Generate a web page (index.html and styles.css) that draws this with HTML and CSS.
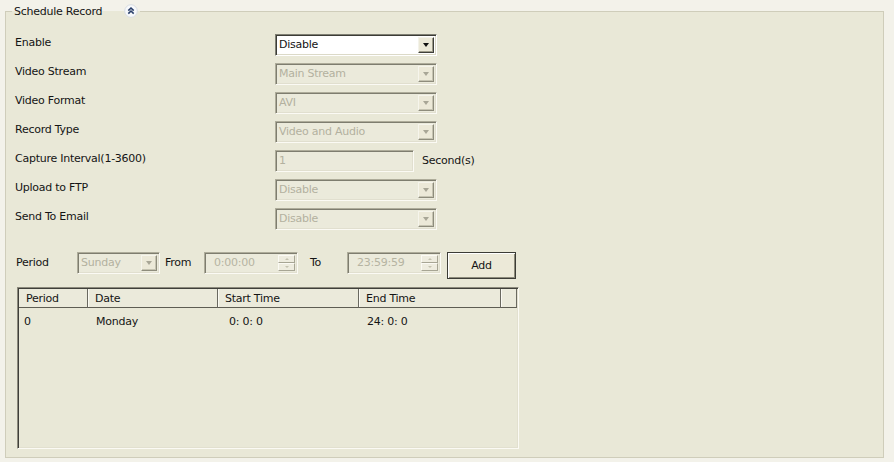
FILE: index.html
```html
<!DOCTYPE html>
<html>
<head>
<meta charset="utf-8">
<title>Schedule Record</title>
<link rel="stylesheet" href="styles.css">
</head>
<body>
<fieldset class="panel">
  <legend class="panel-title">
    <span>Schedule Record</span>
    <span class="collapse-btn">
      <svg width="14" height="14" viewBox="0 0 14 14">
        <circle cx="7" cy="7" r="6.3" fill="#f7f9fb" stroke="#d9dde2" stroke-width="1"/>
        <path d="M4.3 6.6 L7 4 L9.7 6.6 M4.3 9.6 L7 7 L9.7 9.6" fill="none" stroke="#2a3f6a" stroke-width="1.6"/>
      </svg>
    </span>
  </legend>

  <div class="settings">
    <span class="label">Enable</span>
    <div class="combo">
      <span class="combo-value">Disable</span>
      <span class="combo-btn"><i class="arrow"></i></span>
    </div>

    <span class="label">Video Stream</span>
    <div class="combo disabled">
      <span class="combo-value">Main Stream</span>
      <span class="combo-btn"><i class="arrow"></i></span>
    </div>

    <span class="label">Video Format</span>
    <div class="combo disabled">
      <span class="combo-value">AVI</span>
      <span class="combo-btn"><i class="arrow"></i></span>
    </div>

    <span class="label">Record Type</span>
    <div class="combo disabled">
      <span class="combo-value">Video and Audio</span>
      <span class="combo-btn"><i class="arrow"></i></span>
    </div>

    <span class="label">Capture Interval(1-3600)</span>
    <div class="field-unit">
      <div class="textbox disabled">1</div>
      <span class="unit">Second(s)</span>
    </div>

    <span class="label">Upload to FTP</span>
    <div class="combo disabled">
      <span class="combo-value">Disable</span>
      <span class="combo-btn"><i class="arrow"></i></span>
    </div>

    <span class="label">Send To Email</span>
    <div class="combo disabled">
      <span class="combo-value">Disable</span>
      <span class="combo-btn"><i class="arrow"></i></span>
    </div>
  </div>

  <div class="period-bar">
    <span class="period-label">Period</span>
    <div class="combo disabled combo-day">
      <span class="combo-value">Sunday</span>
      <span class="combo-btn"><i class="arrow"></i></span>
    </div>
    <span class="from-label">From</span>
    <div class="spinner disabled">
      <span class="spin-value">0:00:00</span>
      <span class="spin-btns">
        <span class="spin-btn"><i class="tiny-up"></i></span>
        <span class="spin-btn"><i class="tiny-down"></i></span>
      </span>
    </div>
    <span class="to-label">To</span>
    <div class="spinner disabled">
      <span class="spin-value">23:59:59</span>
      <span class="spin-btns">
        <span class="spin-btn"><i class="tiny-up"></i></span>
        <span class="spin-btn"><i class="tiny-down"></i></span>
      </span>
    </div>
    <button class="btn-add" type="button">Add</button>
  </div>

  <div class="records">
    <table class="records-table">
      <colgroup>
        <col class="c-period"><col class="c-date"><col class="c-start"><col class="c-end"><col class="c-rest">
      </colgroup>
      <thead>
        <tr>
          <th>Period</th>
          <th>Date</th>
          <th>Start Time</th>
          <th>End Time</th>
          <th></th>
        </tr>
      </thead>
      <tbody>
        <tr>
          <td class="first">0</td>
          <td>Monday</td>
          <td class="time">0: 0: 0</td>
          <td>24: 0: 0</td>
          <td></td>
        </tr>
      </tbody>
    </table>
  </div>
</fieldset>
</body>
</html>
```

FILE: styles.css
```css
* {
  box-sizing: border-box;
}

body {
  margin: 0;
  padding: 4px 10px 0 5px;
  background: #f3f2ea;
  font-family: "DejaVu Sans", sans-serif;
  font-size: 11px;
  letter-spacing: -0.25px;
  color: #141414;
}

/* group box */
.panel {
  margin: 0;
  width: 879px;
  height: 454px;
  border: 1px solid #cfcdba;
  background: #e9e8d7;
  padding: 16px 9px 0 9px;
}

.panel-title {
  display: flex;
  align-items: center;
  gap: 22px;
  margin-left: -3px;
  margin-top: 1px;
  padding: 0 2px;
  color: #141414;
}

.collapse-btn {
  display: flex;
  width: 14px;
  height: 14px;
}

/* label / control form */
.settings {
  display: grid;
  grid-template-columns: 260px max-content;
  row-gap: 7px;
  align-items: start;
}

.label {
  padding-top: 2px;
  line-height: 14px;
}

.combo {
  display: flex;
  width: 162px;
  height: 22px;
  background: #fff;
  border: 1px solid;
  border-color: #7f7f73 #ffffff #ffffff #7f7f73;
  box-shadow: inset 1px 1px 0 #3c3c36, inset -1px -1px 0 #dcdac8;
  padding: 2px;
}

.combo-value {
  flex: 1;
  line-height: 16px;
  padding-left: 1px;
  white-space: nowrap;
  overflow: hidden;
}

.combo-btn {
  width: 16px;
  height: 16px;
  display: flex;
  align-items: center;
  justify-content: center;
  background: #ece9d8;
  border: 1px solid;
  border-color: #f4f3ea #3f3f3a #3f3f3a #f4f3ea;
  box-shadow: inset -1px -1px 0 #9d9b8a;
}

.arrow {
  display: block;
  width: 0;
  height: 0;
  border-left: 3.5px solid transparent;
  border-right: 3.5px solid transparent;
  border-top: 4px solid #111;
}

.combo.disabled {
  background: #ebeadb;
  border-color: #aeac9a #fbfaf4 #fbfaf4 #aeac9a;
  box-shadow: inset 1px 1px 0 #7e7d6f, inset -1px -1px 0 #e1dfcf;
  color: #b3b19f;
}

.combo.disabled .combo-btn {
  border-color: #f6f5ec #8e8c7c #8e8c7c #f6f5ec;
  box-shadow: inset -1px -1px 0 #c6c4b2;
}

.combo.disabled .arrow {
  border-top-color: #a8a696;
}

.field-unit {
  display: flex;
  align-items: center;
  gap: 8px;
}

.textbox {
  width: 139px;
  height: 22px;
  padding: 3px 3px;
  line-height: 14px;
  border: 1px solid;
  border-color: #aeac9a #fbfaf4 #fbfaf4 #aeac9a;
  box-shadow: inset 1px 1px 0 #7e7d6f, inset -1px -1px 0 #e1dfcf;
}

.textbox.disabled {
  background: #ebeadb;
  color: #b3b19f;
}

.unit {
  margin-top: -2px;
}

/* period toolbar */
.period-bar {
  display: flex;
  align-items: flex-start;
  margin-top: 22px;
}

.period-bar > span {
  line-height: 22px;
}

.period-label {
  width: 62px;
  padding-left: 1px;
}

.combo-day {
  width: 83px;
}

.from-label {
  margin-left: 5px;
  width: 39px;
}

.to-label {
  margin-left: 12px;
  width: 37px;
}

.spinner {
  display: flex;
  width: 94px;
  height: 22px;
  padding: 2px;
  border: 1px solid;
  border-color: #aeac9a #fbfaf4 #fbfaf4 #aeac9a;
  box-shadow: inset 1px 1px 0 #7e7d6f, inset -1px -1px 0 #e1dfcf;
  background: #ebeadb;
  color: #b6b4a2;
}

.spin-value {
  flex: 1;
  line-height: 16px;
  padding-left: 7px;
}

.spin-btns {
  display: flex;
  flex-direction: column;
  width: 17px;
}

.spin-btn {
  flex: 1;
  display: flex;
  align-items: center;
  justify-content: center;
  background: #eeecdf;
  border: 1px solid;
  border-color: #fbfaf4 #a7a594 #a7a594 #fbfaf4;
}

.tiny-up,
.tiny-down {
  display: block;
  width: 0;
  height: 0;
  border-left: 2px solid transparent;
  border-right: 2px solid transparent;
}

.tiny-up {
  border-bottom: 2px solid #c4c2b0;
}

.tiny-down {
  border-top: 2px solid #c4c2b0;
}

.btn-add {
  margin-left: 6px;
  width: 69px;
  height: 27px;
  padding: 0;
  font: inherit;
  letter-spacing: inherit;
  color: #141414;
  background: #ece9d8;
  border: 1px solid #3c3c36;
  box-shadow: inset 1px 1px 0 #ffffff, inset -1px -1px 0 #8c8a7a;
}

/* list of periods */
.records {
  margin: 8px 0 0 2px;
  width: 502px;
  height: 162px;
  border: 1px solid;
  border-color: #8c8a7c #fbfaf4 #fbfaf4 #8c8a7c;
  box-shadow: inset 1px 1px 0 #3f3f3a, inset -1px -1px 0 #e2e0cf;
  padding: 1px;
  overflow: hidden;
}

.records-table {
  width: 498px;
  table-layout: fixed;
  border-collapse: separate;
  border-spacing: 0;
}

.c-period { width: 69px; }
.c-date { width: 130px; }
.c-start { width: 141px; }
.c-end { width: 142px; }
.c-rest { width: 16px; }

.records-table th {
  height: 19px;
  padding: 0 0 0 7px;
  text-align: left;
  font-weight: normal;
  background: #ebeadb;
  border-bottom: 1px solid #5e5d53;
  border-right: 1px solid #6a6960;
  box-shadow: inset 1px 0 0 #fbfaf3;
  white-space: nowrap;
}

.records-table th:first-child {
  box-shadow: none;
}

.records-table td {
  height: 22px;
  padding: 4px 0 0 8px;
  white-space: nowrap;
}

.records-table td.first {
  padding-left: 5px;
}

.records-table td.time {
  padding-left: 11px;
}
```
